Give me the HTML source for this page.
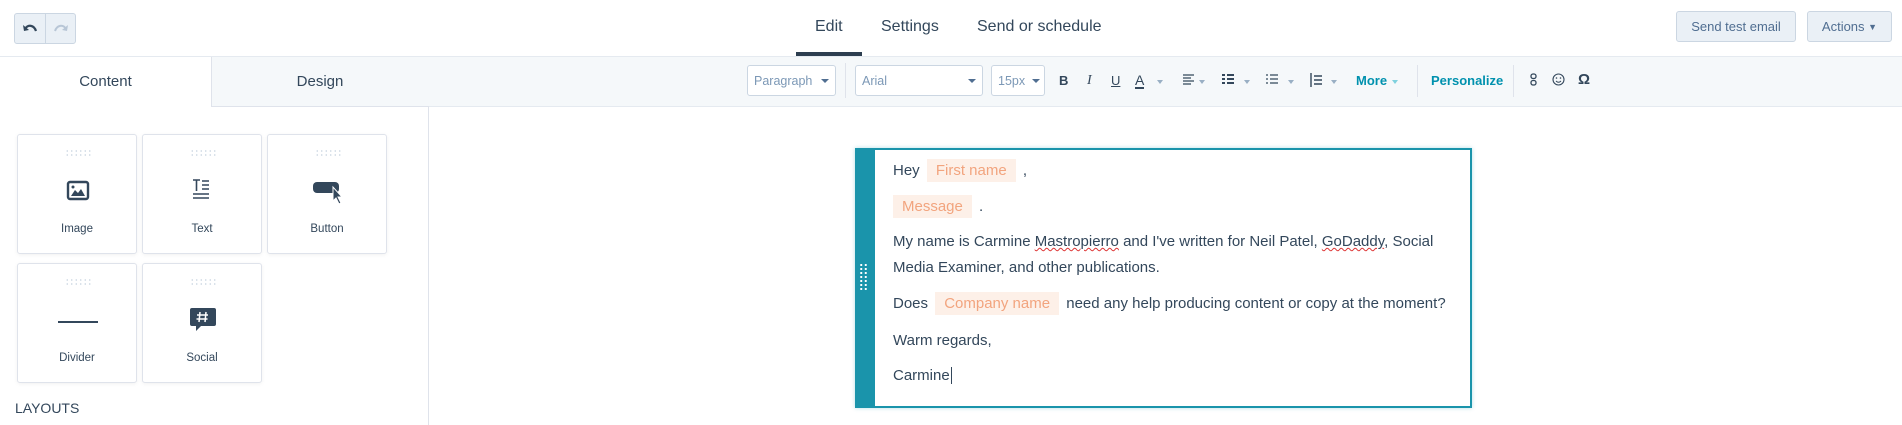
<!DOCTYPE html>
<html><head><meta charset="utf-8"><style>
*{box-sizing:border-box;margin:0;padding:0}
body{width:1902px;height:425px;overflow:hidden;background:#fff;font-family:"Liberation Sans",sans-serif;color:#33475b;position:relative}
.a{position:absolute}
.btn{position:absolute;background:#eaf0f6;border:1px solid #cbd6e2;border-radius:3px;font-size:13px;color:#506e91;display:flex;align-items:center;justify-content:center}
.nav{position:absolute;top:18px;font-size:16px;color:#33475b}
.blk{position:absolute;width:120px;height:120px;border:1px solid #dfe3eb;border-radius:3px;background:#fff;box-shadow:0 1px 4px rgba(0,0,0,.06)}
.blk .dots{position:absolute;left:47px;top:14px;width:27px;height:8px;background-image:radial-gradient(#cbd6e2 0.8px,transparent 1px);background-size:4.5px 4px}
.blk .lb{position:absolute;top:88px;width:100%;text-align:center;font-size:11.5px;color:#33475b}
.blk svg{position:absolute;left:45px;top:42px}
.sel{position:absolute;top:65px;height:31px;background:#fff;border:1px solid #cbd6e2;border-radius:3px;font-size:12.5px;color:#7c98b6;padding:8px 6px}
.car{position:absolute;right:6px;top:13px;border-left:4px solid transparent;border-right:4px solid transparent;border-top:4px solid #506e91}
.tb{position:absolute;top:73px;font-size:13px;color:#33475b}
.sc{border-left:3.5px solid transparent;border-right:3.5px solid transparent;border-top:4px solid #99afc4;position:absolute;top:80px}
.ln{position:absolute;left:893px;font-size:15px;color:#33475b}
.tk{background:#fdf0e8;color:#f2a47e;padding:3px 9px;margin:0 3px}
.sq{text-decoration:underline wavy #d33;text-decoration-thickness:1px}
</style></head><body>
<div class="btn" style="left:14px;top:13px;width:32px;height:31px;border-radius:3px 0 0 3px"><svg width="16" height="12"><path d="M3 6 C6 1 12 2 14 8" fill="none" stroke="#33475b" stroke-width="2.2"/><path d="M1 2 L2 8 L7 7Z" fill="#33475b"/></svg></div>
<div class="btn" style="left:45px;top:13px;width:31px;height:31px;border-radius:0 3px 3px 0"><svg width="16" height="12"><path d="M13 6 C10 1 4 2 2 8" fill="none" stroke="#b8c6d6" stroke-width="2"/><path d="M15 2 L14 8 L9 7Z" fill="#b8c6d6"/></svg></div>
<div class="nav" style="left:815px">Edit</div>
<div class="nav" style="left:881px">Settings</div>
<div class="nav" style="left:977px">Send or schedule</div>
<div class="a" style="left:796px;top:52px;width:66px;height:4px;background:#2d3e50"></div>
<div class="btn" style="left:1676px;top:11px;width:120px;height:31px">Send test email</div>
<div class="btn" style="left:1807px;top:11px;width:85px;height:31px">Actions&nbsp;<span style="font-size:9px">▼</span></div>
<div class="a" style="left:0;top:56px;width:1902px;height:1px;background:#e5eaf0"></div>
<div class="a" style="left:429px;top:57px;width:1473px;height:50px;background:#f5f8fa;border-bottom:1px solid #e5eaf0"></div>
<div class="sel" style="left:747px;width:89px">Paragraph<div class="car"></div></div>
<div class="a" style="left:845px;top:63px;width:1px;height:35px;background:#dfe3eb"></div>
<div class="sel" style="left:855px;width:128px">Arial<div class="car"></div></div>
<div class="sel" style="left:991px;width:54px">15px<div class="car" style="right:4px"></div></div>
<div class="tb" style="left:1059px;font-weight:bold">B</div>
<div class="tb" style="left:1087px;font-style:italic;font-family:'Liberation Serif',serif;font-size:14px">I</div>
<div class="tb" style="left:1111px;text-decoration:underline">U</div>
<div class="tb" style="left:1135px;font-size:14px;border-bottom:2px solid #33475b;line-height:14px">A</div>
<div class="sc" style="left:1157px"></div>
<svg class="a" style="left:1183px;top:74px" width="12" height="11"><path d="M0 1h11M0 4h8M0 7h11M0 10h8" stroke="#33475b" stroke-width="1.3"/></svg><div class="sc" style="left:1199px"></div>
<svg class="a" style="left:1222px;top:74px" width="12" height="11"><path d="M0 1h3M5 1h7M0 5h3M5 5h7M0 9h3M5 9h7" stroke="#33475b" stroke-width="2"/></svg><div class="sc" style="left:1244px"></div>
<svg class="a" style="left:1266px;top:74px" width="12" height="11"><path d="M0 1h2M4 1h8M0 5h2M4 5h8M0 9h2M4 9h8" stroke="#33475b" stroke-width="1.3"/></svg><div class="sc" style="left:1288px"></div>
<svg class="a" style="left:1309px;top:73px" width="13" height="14"><path d="M2 0v14M5 3h8M5 7h8M5 11h8" stroke="#33475b" stroke-width="1.4"/></svg><div class="sc" style="left:1331px"></div>
<div class="tb" style="left:1356px;color:#0091ae;font-weight:bold">More</div><div class="sc" style="left:1392px;border-top-color:#7fd1de"></div>
<div class="a" style="left:1417px;top:65px;width:1px;height:32px;background:#dfe3eb"></div>
<div class="tb" style="left:1431px;color:#0091ae;font-weight:bold">Personalize</div>
<div class="a" style="left:1513px;top:65px;width:1px;height:32px;background:#dfe3eb"></div>
<svg class="a" style="left:1530px;top:73px" width="8" height="13"><rect x="1" y="1" width="5" height="4.5" rx="2" fill="none" stroke="#33475b" stroke-width="1.3"/><rect x="1" y="7.5" width="5" height="4.5" rx="2" fill="none" stroke="#33475b" stroke-width="1.3"/></svg>
<svg class="a" style="left:1552px;top:73px" width="13" height="13"><circle cx="6.5" cy="6.5" r="5.5" fill="none" stroke="#33475b" stroke-width="1.1"/><circle cx="4.5" cy="5" r=".8" fill="#33475b"/><circle cx="8.5" cy="5" r=".8" fill="#33475b"/><path d="M4 8 Q6.5 10.5 9 8" fill="none" stroke="#33475b"/></svg>
<div class="tb" style="left:1578px;font-weight:bold;font-size:15px;top:71px">Ω</div>
<div class="a" style="left:0;top:57px;width:429px;height:368px;border-right:1px solid #dfe3eb"></div>
<div class="a" style="left:211px;top:57px;width:218px;height:50px;background:#f5f8fa;border-left:1px solid #dfe3eb;border-bottom:1px solid #dfe3eb"></div>
<div class="a" style="left:0;top:73px;width:211px;text-align:center;font-size:15px">Content</div>
<div class="a" style="left:211px;top:73px;width:218px;text-align:center;font-size:15px">Design</div>
<div class="blk" style="left:17px;top:134px"><div class="dots"></div><svg width="30" height="30"><rect x="5" y="5" width="20" height="17" rx="2" fill="none" stroke="#33475b" stroke-width="2.4"/><path d="M8 19 L12 13 L15 16 L18 12 L22 19Z" fill="#33475b"/><circle cx="10" cy="10" r="1.5" fill="#33475b"/></svg><div class="lb">Image</div></div>
<div class="blk" style="left:142px;top:134px"><div class="dots"></div><svg width="30" height="30"><path d="M5 3h7M8.5 3v11M14 4h7M14 8h7M14 12h7M5 17h16M5 21h16" stroke="#33475b" stroke-width="1.6"/></svg><div class="lb">Text</div></div>
<div class="blk" style="left:267px;top:134px"><div class="dots"></div><svg width="34" height="30" style="left:43px"><rect x="2" y="5" width="26" height="11" rx="4" fill="#33475b"/><path d="M22 10 L22 24 L25 21 L28 27 L30 26 L27 20 L31 20Z" fill="#33475b" stroke="#fff" stroke-width="1"/></svg><div class="lb">Button</div></div>
<div class="blk" style="left:17px;top:263px"><div class="dots"></div><svg width="40" height="30" style="left:40px"><path d="M0 16h40" stroke="#33475b" stroke-width="2"/></svg><div class="lb">Divider</div></div>
<div class="blk" style="left:142px;top:263px"><div class="dots"></div><svg width="30" height="30"><path d="M4 2h22a2 2 0 0 1 2 2v14a2 2 0 0 1-2 2H13l-5 5v-5H4a2 2 0 0 1-2-2V4a2 2 0 0 1 2-2z" fill="#33475b"/><path d="M12 6l-1 10M18 6l-1 10M9 9h11M8.5 13h11" stroke="#fff" stroke-width="1.5"/></svg><div class="lb">Social</div></div>
<div class="a" style="left:15px;top:400px;font-size:14px">LAYOUTS</div>
<div class="a" style="left:855px;top:148px;width:617px;height:260px;border:2px solid #1a94ab;box-shadow:0 0 4px rgba(0,145,174,.3)"></div>
<div class="a" style="left:855px;top:148px;width:20px;height:260px;background:#1a94ab"></div>
<div class="a" style="left:859px;top:263px;width:9px;height:28px;background-image:radial-gradient(#fff 1px,transparent 1.2px);background-size:4.5px 4px"></div>
<div class="ln" style="top:162px">Hey <span class="tk">First name</span> ,</div>
<div class="ln" style="top:198px"><span class="tk" style="margin-left:0">Message</span> .</div>
<div class="ln" style="top:233px">My name is Carmine <span class="sq">Mastropierro</span> and I've written for Neil Patel, <span class="sq">GoDaddy</span>, Social</div>
<div class="ln" style="top:259px">Media Examiner, and other publications.</div>
<div class="ln" style="top:295px">Does <span class="tk">Company name</span> need any help producing content or copy at the moment?</div>
<div class="ln" style="top:332px">Warm regards,</div>
<div class="ln" style="top:367px">Carmine<span style="border-left:1px solid #33475b;margin-left:1px"></span></div>
</body></html>
